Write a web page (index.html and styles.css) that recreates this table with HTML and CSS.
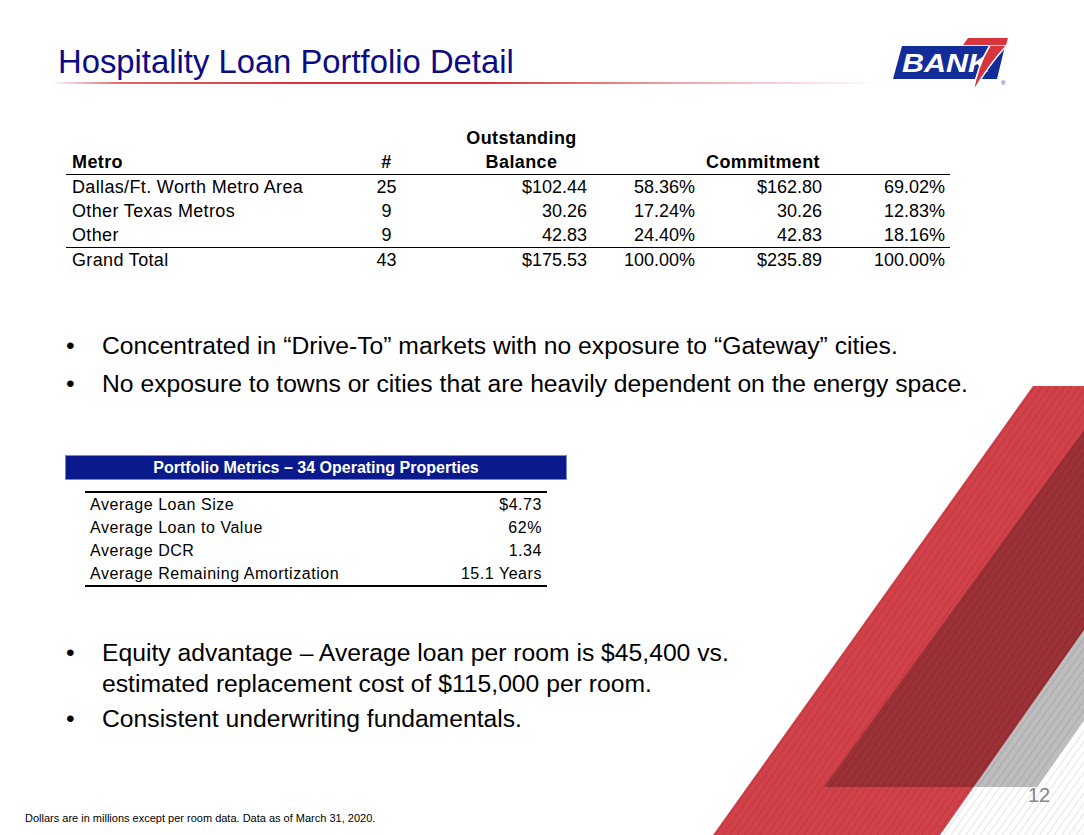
FILE: index.html
```html
<!DOCTYPE html>
<html lang="en">
<head>
<meta charset="utf-8">
<title>Hospitality Loan Portfolio Detail</title>
<link rel="stylesheet" href="styles.css">
</head>
<body>
<div class="slide">
  <svg class="deco" width="384" height="455" viewBox="0 0 384 455" aria-hidden="true">
    <defs>
      <pattern id="hatch" width="6" height="6" patternUnits="userSpaceOnUse" patternTransform="rotate(35.5)">
        <line x1="0.5" y1="0" x2="0.5" y2="6" stroke="#000" stroke-opacity="0.16" stroke-width="0.7"/>
      </pattern>
    </defs>
    <polygon points="333,6 384,6 384,250 240,455 13,455" fill="#d2414a"/>
    <polygon points="384,50 124,407 337,407 384,340" fill="#000" fill-opacity="0.26"/>
    <polygon points="333,6 384,6 384,455 13,455" fill="url(#hatch)"/>
  </svg>

  <header class="header">
    <div class="title-block">
      <h1 class="title">Hospitality Loan Portfolio Detail</h1>
      <div class="title-rule"></div>
    </div>
    <svg class="logo" width="122" height="62" viewBox="0 0 122 62" aria-label="Bank7">
      <polygon points="14,13 117,13 109,46 5,46" fill="#122d9a"/>
      <text x="14" y="39" class="logo-text" textLength="88" lengthAdjust="spacingAndGlyphs">BANK</text>
      <path d="M102,12 L119,12 Q99,34 85,59 Q89,34 102,12 Z" fill="#d8343d" stroke="#fff" stroke-width="1.5"/>
      <polygon points="80,5 120,5 118,12 75,12" fill="#d8343d"/>
      <text x="113" y="52" class="logo-reg">®</text>
    </svg>
  </header>

  <table class="metro-table">
    <colgroup>
      <col class="col-metro">
      <col class="col-count">
      <col class="col-bal">
      <col class="col-pct">
      <col class="col-commit">
      <col class="col-pct2">
    </colgroup>
    <thead>
      <tr>
        <th class="h-metro">Metro</th>
        <th class="h-count">#</th>
        <th class="h-bal">Outstanding<br>Balance</th>
        <th></th>
        <th class="h-commit">Commitment</th>
        <th></th>
      </tr>
    </thead>
    <tbody>
      <tr>
        <td class="metro">Dallas/Ft. Worth Metro Area</td>
        <td class="count">25</td>
        <td class="num">$102.44</td>
        <td class="num">58.36%</td>
        <td class="num">$162.80</td>
        <td class="num last">69.02%</td>
      </tr>
      <tr>
        <td class="metro">Other Texas Metros</td>
        <td class="count">9</td>
        <td class="num">30.26</td>
        <td class="num">17.24%</td>
        <td class="num">30.26</td>
        <td class="num last">12.83%</td>
      </tr>
      <tr>
        <td class="metro">Other</td>
        <td class="count">9</td>
        <td class="num">42.83</td>
        <td class="num">24.40%</td>
        <td class="num">42.83</td>
        <td class="num last">18.16%</td>
      </tr>
      <tr class="total">
        <td class="metro">Grand Total</td>
        <td class="count">43</td>
        <td class="num">$175.53</td>
        <td class="num">100.00%</td>
        <td class="num">$235.89</td>
        <td class="num last">100.00%</td>
      </tr>
    </tbody>
  </table>

  <ul class="bullets bullets-top">
    <li><span class="dot">•</span><span>Concentrated in “Drive-To” markets with no exposure to “Gateway” cities.</span></li>
    <li><span class="dot">•</span><span>No exposure to towns or cities that are heavily dependent on the energy space.</span></li>
  </ul>

  <section class="metrics">
    <div class="metrics-head">Portfolio Metrics – 34 Operating Properties</div>
    <table class="metrics-table">
      <tbody>
        <tr><td>Average Loan Size</td><td class="val">$4.73</td></tr>
        <tr><td>Average Loan to Value</td><td class="val">62%</td></tr>
        <tr><td>Average DCR</td><td class="val">1.34</td></tr>
        <tr><td>Average Remaining Amortization</td><td class="val">15.1 Years</td></tr>
      </tbody>
    </table>
  </section>

  <ul class="bullets bullets-bottom">
    <li><span class="dot">•</span><span>Equity advantage – Average loan per room is $45,400 vs. estimated replacement cost of $115,000 per room.</span></li>
    <li><span class="dot">•</span><span>Consistent underwriting fundamentals.</span></li>
  </ul>

  <p class="footnote">Dollars are in millions except per room data. Data as of March 31, 2020.</p>

  <div class="page-num">12</div>
</div>
</body>
</html>
```

FILE: styles.css
```css
html, body {
  margin: 0;
  padding: 0;
  background: #ffffff;
  overflow: hidden;
}

.slide {
  position: relative;
  z-index: 0;
  width: 1084px;
  height: 835px;
  overflow: hidden;
  background: #ffffff;
  font-family: "Liberation Sans", Arial, sans-serif;
  color: #000;
}

.deco {
  position: absolute;
  left: 700px;
  top: 380px;
  z-index: -1;
  display: block;
}

/* Header */
.header {
  display: flex;
  justify-content: space-between;
  align-items: flex-start;
  padding: 33px 74px 0 55px;
}

.title-block {
  margin-top: 10px;
  width: 825px;
}

.title {
  margin: 0 0 1px 3px;
  font-size: 32.8px;
  line-height: 38px;
  font-weight: normal;
  color: #0b0b86;
}

.title-rule {
  height: 2px;
  background: linear-gradient(to right,
    rgba(214, 51, 59, 0.08) 0%,
    rgba(214, 51, 59, 0.75) 8%,
    #d6333b 30%,
    #d6333b 52%,
    rgba(214, 51, 59, 0.45) 75%,
    rgba(214, 51, 59, 0) 100%);
}

.logo {
  display: block;
}

.logo-text {
  font-family: "Liberation Sans", Arial, sans-serif;
  font-weight: bold;
  font-style: italic;
  font-size: 25px;
  fill: #ffffff;
}

.logo-reg {
  font-family: "Liberation Sans", Arial, sans-serif;
  font-size: 6px;
  fill: #122d9a;
}

/* Metro table */
.metro-table {
  margin: 31px 0 0 66px;
  width: 884px;
  table-layout: fixed;
  border-collapse: collapse;
  border-spacing: 0;
  font-size: 18px;
  line-height: 24px;
}

.col-metro { width: 286px; }
.col-count { width: 69px; }
.col-bal { width: 166px; }
.col-pct { width: 108px; }
.col-commit { width: 127px; }
.col-pct2 { width: 128px; }

.metro-table th,
.metro-table td {
  padding: 0;
  white-space: nowrap;
}

.metro-table thead th {
  font-weight: bold;
  vertical-align: bottom;
  letter-spacing: 0.4px;
  border-bottom: 1px solid #000;
}

.h-metro { text-align: left; padding-left: 6px !important; }
.h-count { text-align: center; }
.h-bal { text-align: center; padding-left: 35px !important; }
.h-commit { text-align: center; padding-left: 9px !important; }

.metro {
  text-align: left;
  padding-left: 6px !important;
  letter-spacing: 0.35px;
}
.count { text-align: center; }
.num { text-align: right; }
.num.last { padding-right: 5px !important; }

.total td {
  border-top: 1px solid #000;
}

/* Bullets */
.bullets {
  list-style: none;
  margin: 0;
  padding: 0 0 0 66px;
  font-size: 24.7px;
  line-height: 31.5px;
}

.bullets li {
  display: grid;
  grid-template-columns: 36px 1fr;
}

.bullets-top {
  margin-top: 58px;
}

.bullets-top li + li {
  margin-top: 6.5px;
}

.bullets-bottom {
  margin-top: 50px;
  width: 724px;
}

.bullets-bottom li + li {
  margin-top: 3.5px;
}

/* Metrics */
.metrics {
  margin-top: 55px;
}

.metrics-head {
  margin-left: 65px;
  width: 500px;
  border: 1px solid #6f8fd0;
  background: #0a1a8c;
  color: #ffffff;
  font-weight: bold;
  font-size: 16px;
  line-height: 23px;
  text-align: center;
}

.metrics-table {
  margin: 11px 0 0 85px;
  width: 462px;
  border-collapse: collapse;
  border-spacing: 0;
  border-top: 2px solid #000;
  border-bottom: 2px solid #000;
  font-size: 16px;
  line-height: 23px;
  letter-spacing: 0.55px;
}

.metrics-table td {
  padding: 0 0 0 5px;
  white-space: nowrap;
}

.metrics-table td.val {
  text-align: right;
  padding: 0 5px 0 0;
}

/* Footer */
.footnote {
  margin: 77px 0 0 25px;
  font-size: 11px;
  line-height: 13px;
}

.page-num {
  position: absolute;
  left: 1028px;
  top: 785px;
  font-size: 20px;
  line-height: 20px;
  color: #858585;
}
```
